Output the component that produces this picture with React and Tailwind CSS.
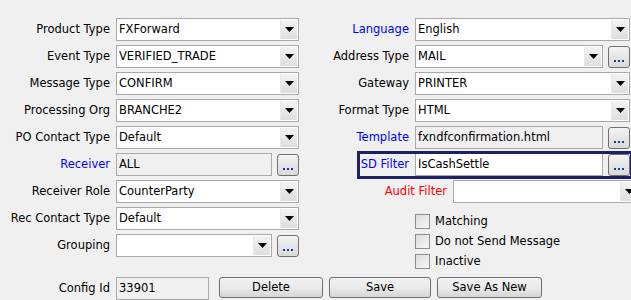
import React from "react";

const font = { fontFamily: '"DejaVu Sans", Verdana, sans-serif' };

function Arrow() {
  return (
    <div className="w-[17px] h-full flex items-center justify-center bg-gradient-to-b from-[#f3f3f3] to-[#dedede] border-l border-[#e8e8e8]">
      <svg width="9" height="5" viewBox="0 0 9 5">
        <path d="M0 0 H9 L4.5 5 Z" fill="#000" />
      </svg>
    </div>
  );
}

function Combo({ value, w }) {
  return (
    <div className={`h-[23px] ${w} shrink-0 flex border border-[#a9a9a9] bg-white`}>
      <div className="flex-1 flex items-center pl-[2px] pt-[1px] text-[11.5px] text-black whitespace-nowrap overflow-hidden">{value}</div>
      <div className="p-[1px] h-full"><Arrow /></div>
    </div>
  );
}

function Field({ value, w, bg = "bg-[#f0f0f0]" }) {
  return (
    <div className={`h-[23px] ${w} shrink-0 flex items-center pl-[2px] pt-[1px] border border-[#a9a9a9] ${bg} text-[11.5px] text-black whitespace-nowrap overflow-hidden`}>
      {value}
    </div>
  );
}

function Dots() {
  return (
    <div className="h-[22px] w-[22px] shrink-0 rounded-[3px] border border-[#707070] bg-gradient-to-b from-[#f4f4f4] to-[#d9d9d9] flex items-end justify-center pb-[5px]">
      <div className="flex gap-[2px]">
        <span className="w-[2px] h-[2px] bg-[#1a3a8a]" />
        <span className="w-[2px] h-[2px] bg-[#1a3a8a]" />
        <span className="w-[2px] h-[2px] bg-[#1a3a8a]" />
      </div>
    </div>
  );
}

function Btn({ label, w }) {
  return (
    <div className={`h-[21px] ${w} shrink-0 rounded-[3px] border border-[#707070] bg-gradient-to-b from-[#f2f2f2] via-[#ebebeb] to-[#d6d6d6] flex items-center justify-center pt-[1px] text-[11.5px] text-black`}>
      {label}
    </div>
  );
}

function Row({ label, color = "text-black", children, lw = "w-[110px]" }) {
  return (
    <div className="h-[23px] flex items-center">
      <div className={`${lw} shrink-0 text-right pt-[1px] text-[11.5px] ${color} whitespace-nowrap`}>{label}</div>
      <div className="w-[6px] shrink-0" />
      {children}
    </div>
  );
}

function Check({ label }) {
  return (
    <div className="h-[20px] flex items-center">
      <div className="w-[15px] h-[15px] border border-[#8e8e8e] bg-gradient-to-br from-[#dcdcdc] to-[#f7f7f7] shrink-0" />
      <div className="w-[5px]" />
      <span className="text-[11.5px] pt-[1px] text-black whitespace-nowrap">{label}</span>
    </div>
  );
}

export default function App() {
  return (
    <div style={font} className="w-[631px] h-[300px] bg-[#f0f0f0] overflow-hidden flex flex-col pt-[18px]">
      <div className="h-[259px] flex shrink-0">
        <div className="w-[299px] shrink-0 flex flex-col gap-[4px]">
          <Row label="Product Type"><Combo value="FXForward" w="w-[183px]" /></Row>
          <Row label="Event Type"><Combo value="VERIFIED_TRADE" w="w-[183px]" /></Row>
          <Row label="Message Type"><Combo value="CONFIRM" w="w-[183px]" /></Row>
          <Row label="Processing Org"><Combo value="BRANCHE2" w="w-[183px]" /></Row>
          <Row label="PO Contact Type"><Combo value="Default" w="w-[183px]" /></Row>
          <Row label="Receiver" color="text-[#0000ff]">
            <Field value="ALL" w="w-[156px]" />
            <div className="w-[5px]" />
            <Dots />
          </Row>
          <Row label="Receiver Role"><Combo value="CounterParty" w="w-[183px]" /></Row>
          <Row label="Rec Contact Type"><Combo value="Default" w="w-[183px]" /></Row>
          <Row label="Grouping">
            <Combo value="" w="w-[156px]" />
            <div className="w-[5px]" />
            <Dots />
          </Row>
        </div>
        <div className="flex-1 flex flex-col gap-[4px]">
          <Row label="Language" color="text-[#0000ff]"><Combo value="English" w="w-[215px]" /></Row>
          <Row label="Address Type">
            <Combo value="MAIL" w="w-[188px]" />
            <div className="w-[5px]" />
            <Dots />
          </Row>
          <Row label="Gateway"><Combo value="PRINTER" w="w-[215px]" /></Row>
          <Row label="Format Type"><Combo value="HTML" w="w-[215px]" /></Row>
          <Row label="Template" color="text-[#0000ff]">
            <Field value="fxndfconfirmation.html" w="w-[188px]" />
            <div className="w-[5px]" />
            <Dots />
          </Row>
          <div className="relative">
            <Row label="SD Filter" color="text-[#0000ff]">
              <Field value="IsCashSettle" w="w-[188px]" bg="bg-white" />
              <div className="w-[5px]" />
              <Dots />
            </Row>
            <div className="absolute left-[58px] top-[-2px] w-[276px] h-[28px] border-[3px] border-[#1f1f66] pointer-events-none" />
          </div>
          <Row label="Audit Filter" color="text-[#ff0000]" lw="w-[148px]">
            <Combo value="" w="w-[186px]" />
          </Row>
          <div className="pl-[116px] mt-[4px] flex flex-col">
            <Check label="Matching" />
            <Check label="Do not Send Message" />
            <Check label="Inactive" />
          </div>
        </div>
      </div>
      <div className="flex items-start">
        <div className="w-[110px] text-right pt-[1px] text-[11.5px] text-black h-[23px] flex items-center justify-end">Config Id</div>
        <div className="w-[6px]" />
        <Field value="33901" w="w-[93px]" />
        <div className="w-[10px]" />
        <Btn label="Delete" w="w-[104px]" />
        <div className="w-[6px]" />
        <Btn label="Save" w="w-[102px]" />
        <div className="w-[6px]" />
        <Btn label="Save As New" w="w-[105px]" />
      </div>
    </div>
  );
}
